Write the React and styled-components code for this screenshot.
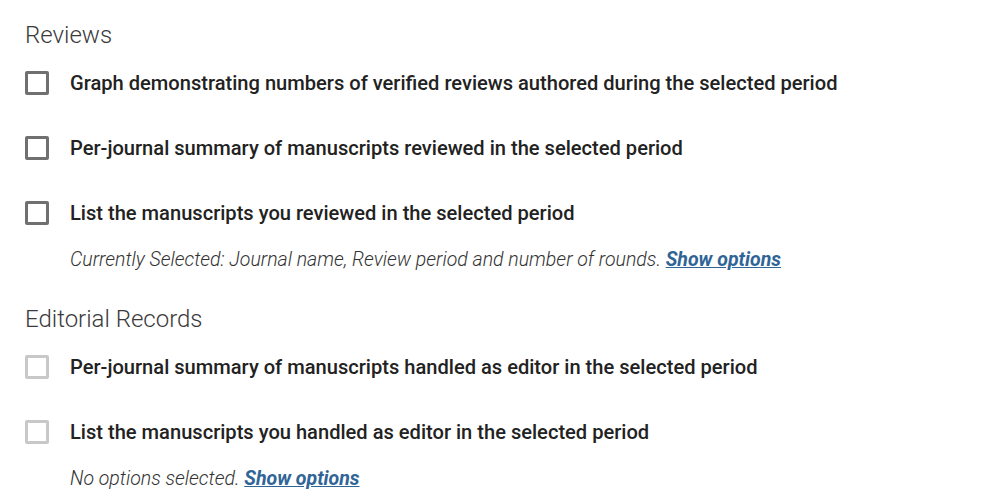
import React from 'react'
import styled, { createGlobalStyle } from 'styled-components'

const GlobalStyle = createGlobalStyle`
  body {
    margin: 0;
    background: #ffffff;
    font-family: Roboto, "Liberation Sans", sans-serif;
  }
`

const sections = [
  {
    title: 'Reviews',
    enabled: true,
    items: [
      { label: 'Graph demonstrating numbers of verified reviews authored during the selected period' },
      { label: 'Per-journal summary of manuscripts reviewed in the selected period' },
      {
        label: 'List the manuscripts you reviewed in the selected period',
        note: 'Currently Selected: Journal name, Review period and number of rounds.',
      },
    ],
  },
  {
    title: 'Editorial Records',
    enabled: false,
    items: [
      { label: 'Per-journal summary of manuscripts handled as editor in the selected period' },
      {
        label: 'List the manuscripts you handled as editor in the selected period',
        note: 'No options selected.',
      },
    ],
  },
]

function Reports() {
  return (
    <Page>
      {sections.map((section) => (
        <Section key={section.title}>
          <Heading>{section.title}</Heading>
          <ItemList>
            {section.items.map((item) => (
              <Item key={item.label}>
                <Row>
                  <Box $enabled={section.enabled} />
                  <Label>{item.label}</Label>
                </Row>
                {item.note && (
                  <Note>
                    {item.note} <OptionsLink href="#">Show options</OptionsLink>
                  </Note>
                )}
              </Item>
            ))}
          </ItemList>
        </Section>
      ))}
    </Page>
  )
}

export default function App() {
  return (
    <>
      <GlobalStyle />
      <Reports />
    </>
  )
}

const Page = styled.div`
  display: flex;
  flex-direction: column;
  gap: 32px;
  padding: 20px 25px;
`

const Section = styled.section`
  display: flex;
  flex-direction: column;
  gap: 21px;
`

const Heading = styled.h2`
  margin: 0;
  font-size: 24px;
  line-height: 30px;
  font-weight: 300;
  color: #3a3a3a;
`

const ItemList = styled.div`
  display: flex;
  flex-direction: column;
  gap: 41px;
`

const Item = styled.div`
  display: flex;
  flex-direction: column;
  gap: 23px;
`

const Row = styled.label`
  display: flex;
  align-items: center;
  gap: 21px;
  height: 24px;
`

const Box = styled.span`
  flex: none;
  box-sizing: border-box;
  width: 24px;
  height: 24px;
  border: 3px solid ${(p) => (p.$enabled ? '#707070' : '#c8c8c8')};
  border-radius: 2px;
  background: #fff;
`

const Label = styled.span`
  font-size: 20.1px;
  line-height: 24px;
  font-weight: 500;
  color: #222222;
`

const Note = styled.p`
  margin: 0 0 0 45px;
  font-size: 19.5px;
  line-height: 24px;
  font-weight: 300;
  font-style: italic;
  color: #333333;
`

const OptionsLink = styled.a`
  font-weight: 700;
  color: #2f6496;
  text-decoration: underline;
`
